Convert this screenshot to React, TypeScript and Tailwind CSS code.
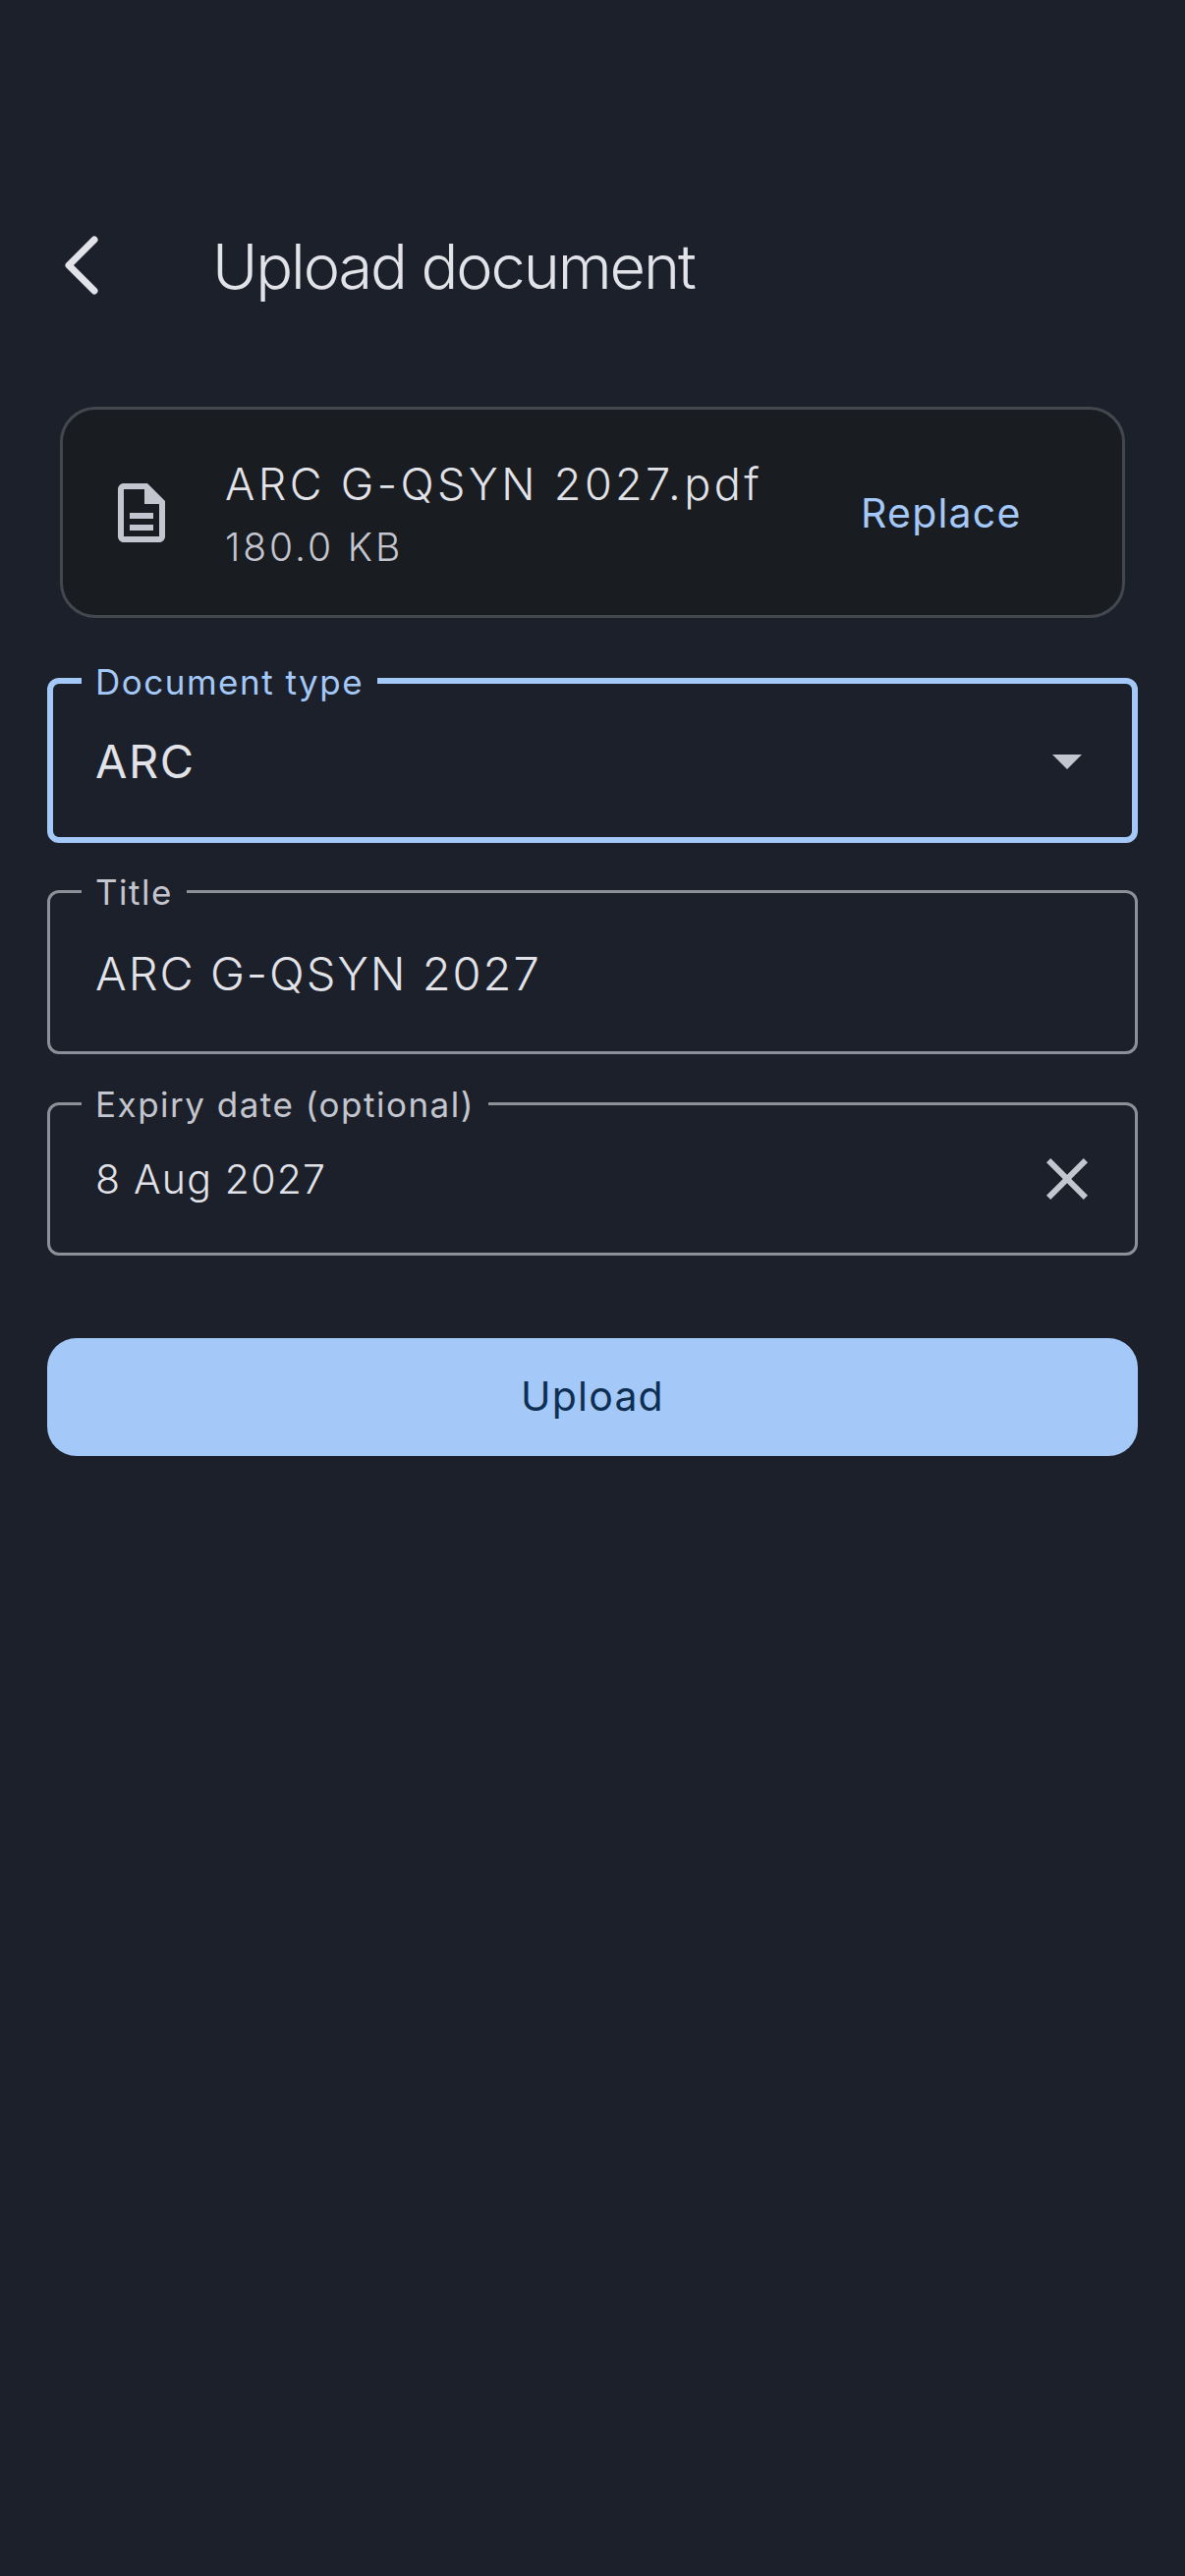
import React, { ReactNode } from 'react';

interface FieldProps {
  label: string;
  focused?: boolean;
  className: string;
  children: ReactNode;
}

function Field({ label, focused, className, children }: FieldProps) {
  return (
    <div
      className={`relative flex items-center rounded-[12px] ${
        focused ? 'border-[6px] border-[#a4c9f8] pl-[43px]' : 'border-[3px] border-[#8e9099] pl-[46px]'
      } ${className}`}
    >
      <span
        className={`absolute bg-[#1c202a] px-[14px] text-[35px] leading-[44px] tracking-[1.5px] whitespace-nowrap ${
          focused ? 'top-[-24px] left-[29px] text-[#a4c9f8]' : 'top-[-23px] left-[32px] text-[#c4c6cf]'
        }`}
      >
        {label}
      </span>
      {children}
    </div>
  );
}

export default function App() {
  return (
    <div className="min-h-[2622px] bg-[#1c202a] font-['Inter',sans-serif] text-[#e2e2e9]">
      <div className="flex flex-col px-[48px] pt-[234px]">
        <header className="flex h-[72px] items-center">
          <button className="ml-[12px] flex h-[72px] w-[48px] items-center justify-center">
            <svg viewBox="0 0 48 72" className="h-[72px] w-[48px]" fill="none" stroke="#e2e2e9" strokeWidth={7} strokeLinecap="round" strokeLinejoin="round">
              <path d="M36 10 L10 36 L36 62" />
            </svg>
          </button>
          <h1 className="ml-[108px] pt-[1px] text-[63px] leading-[72px] font-light tracking-[-2.1px]">Upload document</h1>
        </header>

        <div className="mx-[13px] mt-[108px] flex h-[215px] items-center rounded-[36px] border-[3px] border-[#44474e] bg-[#191c20] pl-[44px]">
          <svg viewBox="0 0 24 24" className="h-[72px] w-[72px] shrink-0" fill="#c4c6cf">
            <path d="M8 16h8v2H8zm0-4h8v2H8zm6-10H6c-1.1 0-2 .9-2 2v16c0 1.1.89 2 1.99 2H18c1.1 0 2-.9 2-2V8l-6-6zm4 18H6V4h7v5h5v11z" />
          </svg>
          <div className="ml-[49px] flex flex-col">
            <div className="text-[45px] leading-[60px] font-light tracking-[3.4px] whitespace-nowrap">ARC G-QSYN 2027.pdf</div>
            <div className="mt-[10px] text-[39px] leading-[48px] font-light tracking-[2.9px] text-[#c4c6cf]">180.0 KB</div>
          </div>
          <button className="ml-[100px] pt-[2px] text-[41px] tracking-[1.2px] text-[#a4c9f8]">Replace</button>
        </div>

        <Field label="Document type" focused className="mt-[61px] h-[168px]">
          <span className="pt-[2px] text-[47px] tracking-[1.5px]">ARC</span>
          <svg viewBox="0 0 30 15" className="absolute right-[51px] top-[72px] h-[15px] w-[30px]" fill="#c4c6cf">
            <path d="M0 0 H30 L15 15 Z" />
          </svg>
        </Field>

        <Field label="Title" className="mt-[48px] h-[167px]">
          <span className="pt-[3px] text-[47px] font-light tracking-[2px]">ARC G-QSYN 2027</span>
        </Field>

        <Field label="Expiry date (optional)" className="mt-[49px] h-[156px]">
          <span className="pt-[1px] text-[41px] font-light tracking-[1.2px]">8 Aug 2027</span>
          <svg viewBox="0 0 24 24" className="absolute right-[33px] top-[39px] h-[72px] w-[72px]" fill="#c4c6cf">
            <path d="M19 6.41 17.59 5 12 10.59 6.41 5 5 6.41 10.59 12 5 17.59 6.41 19 12 13.41 17.59 19 19 17.59 13.41 12z" />
          </svg>
        </Field>

        <button className="mt-[84px] h-[120px] rounded-[30px] bg-[#a4c9f8] text-[41px] tracking-[1.2px] text-[#0f2f52]">
          Upload
        </button>
      </div>
    </div>
  );
}
